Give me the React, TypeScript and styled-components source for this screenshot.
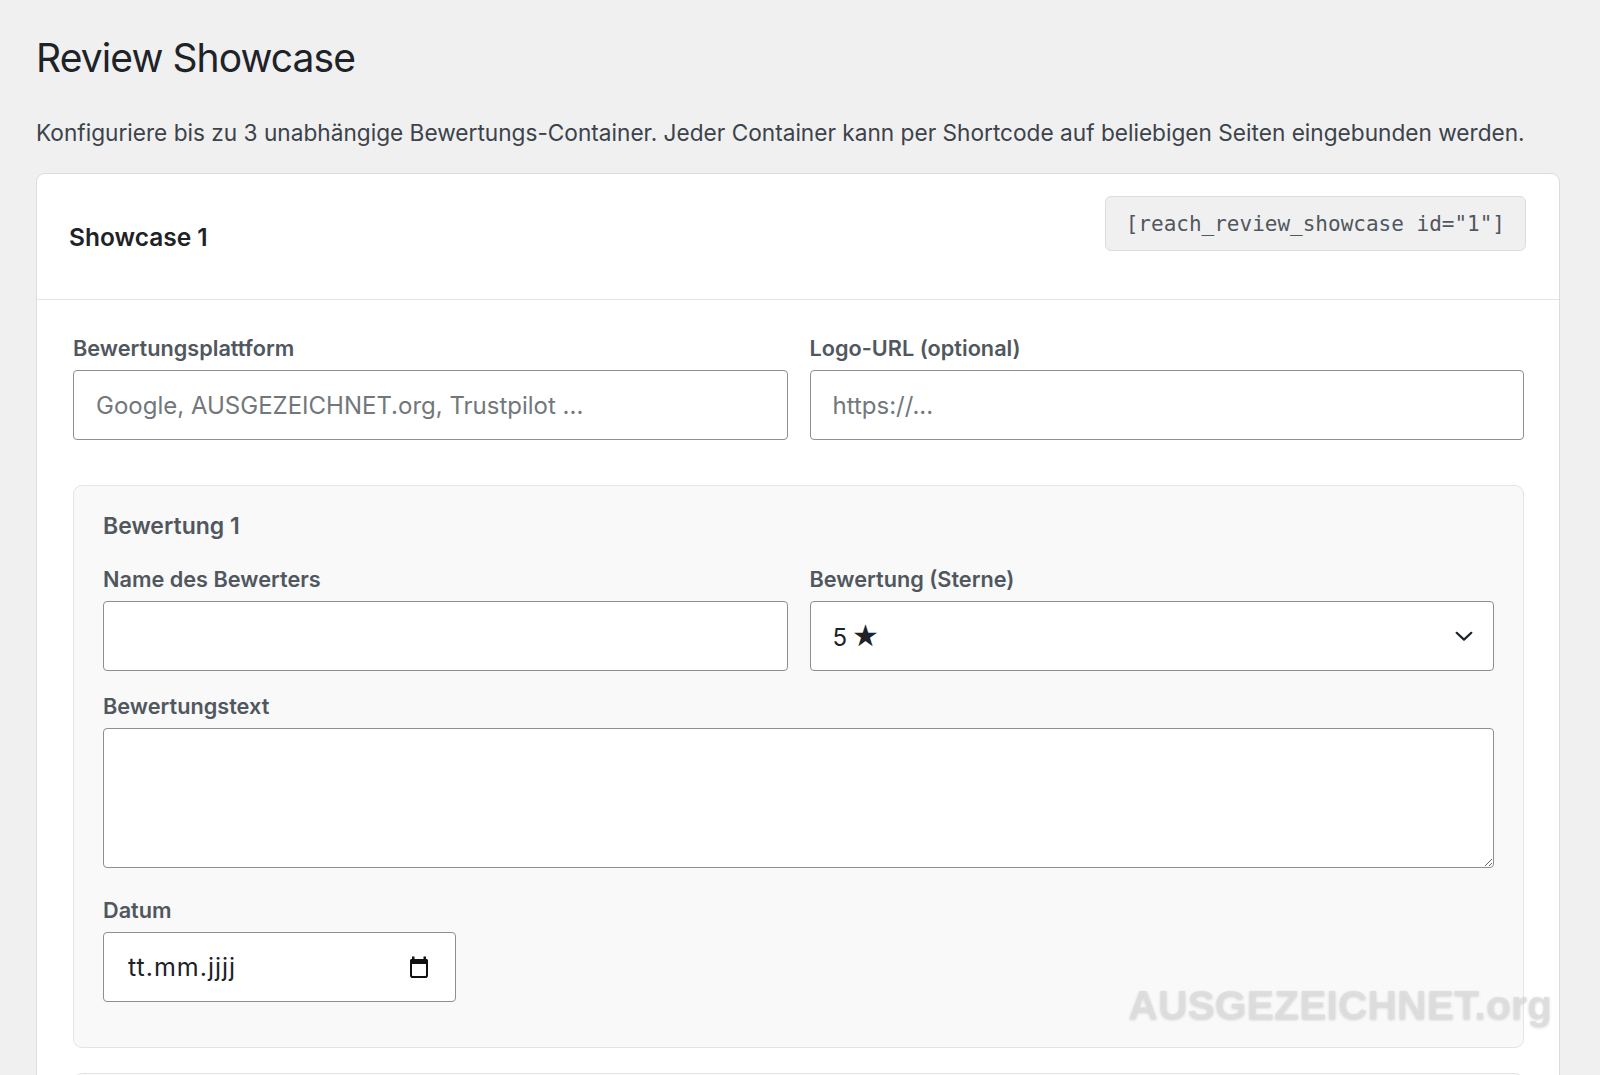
import React from 'react';
import styled, { createGlobalStyle } from 'styled-components';

const GlobalStyle = createGlobalStyle`
  html, body {
    margin: 0;
    padding: 0;
    background: #f0f0f1;
  }
  body {
    font-family: Inter, "Noto Sans", "Liberation Sans", sans-serif;
    color: #1d2327;
    overflow: hidden;
  }
  * {
    box-sizing: border-box;
  }
`;

const Page = styled.div`
  min-height: 1075px;
  padding: 34px 40px 0 36px;
`;

const Title = styled.h1`
  margin: 0 0 36px;
  font-size: 39px;
  font-weight: 400;
  line-height: 48px;
  color: #1d2327;
  letter-spacing: -0.9px;
`;

const Intro = styled.p`
  margin: 0 0 25px;
  font-size: 22.65px;
  line-height: 30px;
  color: #3c434a;
  white-space: nowrap;
`;

const Card = styled.section`
  background: #fff;
  border: 1px solid #dcdcde;
  border-radius: 9px;
`;

const CardHeader = styled.header`
  display: flex;
  justify-content: space-between;
  align-items: center;
  min-height: 126px;
  padding: 0 33px 0 32px;
  border-bottom: 1px solid #e4e4e6;
`;

const CardTitle = styled.h2`
  margin: 0;
  font-size: 24.5px;
  font-weight: 600;
  color: #1d2327;
`;

const Shortcode = styled.code`
  align-self: flex-start;
  margin-top: 22px;
  padding: 0 20px;
  height: 55px;
  display: flex;
  align-items: center;
  background: #f0f0f1;
  border: 1px solid #dcdcde;
  border-radius: 6px;
  font-family: "DejaVu Sans Mono", "Liberation Mono", monospace;
  font-size: 21px;
  color: #50575e;
`;

const CardBody = styled.div`
  padding: 34px 35px 0 36px;
`;

const Grid = styled.div<{ $gap?: number }>`
  display: grid;
  grid-template-columns: 1fr 1fr;
  column-gap: 22px;
  margin-bottom: ${(p) => p.$gap ?? 21}px;
`;

const Field = styled.div<{ $gap?: number }>`
  display: flex;
  flex-direction: column;
  margin-bottom: ${(p) => p.$gap ?? 0}px;
`;

const Label = styled.label`
  display: block;
  margin-bottom: 8px;
  font-size: 21.7px;
  line-height: 28px;
  font-weight: 600;
  color: #50575e;
`;

const TextInput = styled.input`
  width: 100%;
  height: 70px;
  padding: 0 22px;
  border: 1px solid #8c8f94;
  border-radius: 4px;
  background: #fff;
  font-family: inherit;
  font-size: 24px;
  color: #1d2327;
  outline: none;

  &::placeholder {
    color: #72777c;
  }
`;

const TextArea = styled.textarea`
  display: block;
  width: 100%;
  height: 140px;
  border: 1px solid #8c8f94;
  border-radius: 4px;
  background: #fff;
  font-family: inherit;
  font-size: 22px;
  resize: vertical;
  outline: none;
`;

const FakeControl = styled.div<{ $width?: number; $padRight?: number }>`
  display: flex;
  align-items: center;
  justify-content: space-between;
  width: ${(p) => (p.$width ? `${p.$width}px` : '100%')};
  height: 70px;
  padding: 0 ${(p) => p.$padRight ?? 22}px 0 22px;
  border: 1px solid #8c8f94;
  border-radius: 4px;
  background: #fff;
  font-size: 24px;
  color: #1d2327;
`;

const DateText = styled.span`
  font-size: 25px;
  letter-spacing: 1px;
  padding-left: 2px;
`;

const Star = styled.span`
  font-family: "DejaVu Sans", sans-serif;
  font-size: 30px;
  line-height: 1;
  margin-left: 5px;
`;

const Review = styled.div`
  background: #f9f9f9;
  border: 1px solid #e2e4e7;
  border-radius: 9px;
  padding: 26px 29px 45px 29px;
  margin-bottom: 25px;
`;

const ReviewTitle = styled.h3`
  margin: 0 0 25px;
  font-size: 23px;
  line-height: 28px;
  font-weight: 600;
  color: #50575e;
`;

const Watermark = styled.div`
  position: fixed;
  top: 982px;
  right: 48px;
  font-family: "Liberation Sans", Arial, sans-serif;
  font-weight: 700;
  font-size: 41px;
  line-height: 46px;
  color: rgba(220, 220, 220, 0.92);
  text-shadow: 0 1px 3px rgba(0, 0, 0, 0.16);
  filter: blur(0.7px);
  pointer-events: none;
`;

const Chevron = () => (
  <svg width="22" height="22" viewBox="0 0 24 24" fill="none" stroke="#1d2327" strokeWidth="2.4" strokeLinecap="round" strokeLinejoin="round">
    <polyline points="4,8.5 12,16 20,8.5" />
  </svg>
);

const CalendarIcon = () => (
  <svg width="20" height="22" viewBox="0 0 20 22">
    <rect x="3" y="0.5" width="2.5" height="4" fill="#111" />
    <rect x="14.5" y="0.5" width="2.5" height="4" fill="#111" />
    <rect x="1" y="3" width="18" height="5" rx="1.5" fill="#111" />
    <rect x="2" y="4" width="16" height="17" rx="1.8" fill="none" stroke="#111" strokeWidth="2" />
  </svg>
);

const App = () => {
  return (
    <>
      <GlobalStyle />
      <Page>
        <Title>Review Showcase</Title>
        <Intro>
          Konfiguriere bis zu 3 unabhängige Bewertungs-Container. Jeder Container kann per Shortcode auf beliebigen Seiten eingebunden werden.
        </Intro>

        <Card>
          <CardHeader>
            <CardTitle>Showcase 1</CardTitle>
            <Shortcode>[reach_review_showcase id="1"]</Shortcode>
          </CardHeader>

          <CardBody>
            <Grid $gap={45}>
              <Field>
                <Label>Bewertungsplattform</Label>
                <TextInput placeholder="Google, AUSGEZEICHNET.org, Trustpilot ..." />
              </Field>
              <Field>
                <Label>Logo-URL (optional)</Label>
                <TextInput placeholder="https://..." />
              </Field>
            </Grid>

            <Review>
              <ReviewTitle>Bewertung 1</ReviewTitle>
              <Grid $gap={21}>
                <Field>
                  <Label>Name des Bewerters</Label>
                  <TextInput />
                </Field>
                <Field>
                  <Label>Bewertung (Sterne)</Label>
                  <FakeControl $padRight={18}>
                    <span>
                      5<Star>★</Star>
                    </span>
                    <Chevron />
                  </FakeControl>
                </Field>
              </Grid>

              <Field $gap={28}>
                <Label>Bewertungstext</Label>
                <TextArea />
              </Field>

              <Field>
                <Label>Datum</Label>
                <FakeControl $width={353} $padRight={26}>
                  <DateText>tt.mm.jjjj</DateText>
                  <CalendarIcon />
                </FakeControl>
              </Field>
            </Review>

            <Review />
          </CardBody>
        </Card>

        <Watermark>AUSGEZEICHNET.org</Watermark>
      </Page>
    </>
  );
};

export default App;
